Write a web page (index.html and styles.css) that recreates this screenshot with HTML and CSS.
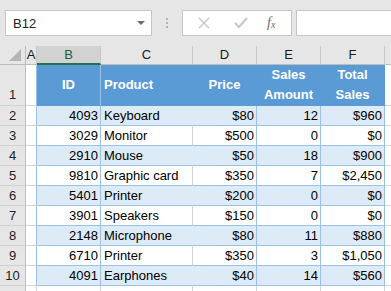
FILE: index.html
```html
<!DOCTYPE html>
<html lang="en">
<head>
    <meta charset="UTF-8">
    <title>Sales Sheet</title>
    <link rel="stylesheet" href="styles.css">
</head>
<body>
    <!-- Name box and formula bar -->
    <div class="toolbar">
        <div class="name-box">
            <span>B12</span>
            <span class="drop"></span>
        </div>
        <div class="grip"><i></i><i></i><i></i></div>
        <div class="fx-buttons">
            <svg width="14" height="14" viewBox="0 0 14 14"><path d="M2 2 L12 12 M12 2 L2 12" stroke="#c6c6c6" stroke-width="1.4" fill="none"/></svg>
            <svg width="16" height="14" viewBox="0 0 16 14"><path d="M2 7 L6 11 L14 2" stroke="#c6c6c6" stroke-width="2" fill="none"/></svg>
            <span class="fx">f<sub>x</sub></span>
        </div>
        <div class="formula"></div>
    </div>

    <!-- Grid -->
    <div class="sheet">
        <div class="corner"><span class="tri"></span></div>
        <div class="col-head">A</div>
        <div class="col-head selected">B</div>
        <div class="col-head">C</div>
        <div class="col-head">D</div>
        <div class="col-head">E</div>
        <div class="col-head">F</div>
        <div class="col-head last"></div>

        <div class="row-head first">1</div>
        <div class="cell col-a"></div>
        <div class="cell th sep center">ID</div>
        <div class="cell th">Product</div>
        <div class="cell th center">Price</div>
        <div class="cell th center">Sales<br>Amount</div>
        <div class="cell th center">Total<br>Sales</div>
        <div class="cell blank"></div>
    </div>
    <div class="sheet rows" id="rows"></div>

    <script>
        const data = [
            [4093, 'Keyboard', '$80', 12, '$960'],
            [3029, 'Monitor', '$500', 0, '$0'],
            [2910, 'Mouse', '$50', 18, '$900'],
            [9810, 'Graphic card', '$350', 7, '$2,450'],
            [5401, 'Printer', '$200', 0, '$0'],
            [3901, 'Speakers', '$150', 0, '$0'],
            [2148, 'Microphone', '$80', 11, '$880'],
            [6710, 'Printer', '$350', 3, '$1,050'],
            [4091, 'Earphones', '$40', 14, '$560']
        ];
        const rows = document.getElementById('rows');
        let html = '';
        data.forEach((r, i) => {
            const band = i % 2 === 0 ? 'band' : '';
            html += `
                <div class="row-head">${i + 2}</div>
                <div class="cell col-a"></div>
                <div class="cell td num ${band}">${r[0]}</div>
                <div class="cell td name ${band}">${r[1]}</div>
                <div class="cell td num ${band}">${r[2]}</div>
                <div class="cell td num ${band}">${r[3]}</div>
                <div class="cell td num ${band}">${r[4]}</div>
                <div class="cell blank"></div>
            `;
        });
        html += '<div class="row-head tail"></div><div class="cell col-a tail"></div>' +
            '<div class="cell tail"></div><div class="cell tail"></div><div class="cell tail"></div>' +
            '<div class="cell tail"></div><div class="cell tail"></div><div class="cell tail blank"></div>';
        rows.innerHTML = html;
    </script>
</body>
</html>
```

FILE: styles.css
```css
body {
    margin: 0;
    font-family: "Liberation Sans", Arial, sans-serif;
    font-size: 13px;
    color: #000;
    background: #fff;
    overflow: hidden;
}

/* Formula bar */
.toolbar {
    display: flex;
    height: 46px;
    padding: 10px 0 0 5px;
    box-sizing: border-box;
    background: #e6e6e6;
}

.name-box {
    width: 147px;
    height: 26px;
    box-sizing: border-box;
    background: #fff;
    border: 1px solid #c6c6c6;
    display: flex;
    align-items: center;
    justify-content: space-between;
    padding: 0 6px 0 7px;
    color: #222;
}

.drop {
    width: 0;
    height: 0;
    border-left: 4px solid transparent;
    border-right: 4px solid transparent;
    border-top: 4px solid #6b6b6b;
}

.grip {
    width: 30px;
    display: flex;
    flex-direction: column;
    align-items: center;
    justify-content: center;
    gap: 2px;
    height: 26px;
}

.grip i {
    width: 2px;
    height: 2px;
    background: #b3b3b3;
}

.fx-buttons {
    width: 110px;
    height: 26px;
    box-sizing: border-box;
    background: #fff;
    border: 1px solid #c6c6c6;
    display: flex;
    align-items: center;
    padding-left: 14px;
    gap: 22px;
}

.fx {
    font-family: "Liberation Serif", serif;
    font-style: italic;
    font-size: 14px;
    color: #6e6e6e;
    margin-left: -4px;
}

.fx sub {
    font-size: 10px;
    vertical-align: -1px;
}

.formula {
    flex: 1;
    margin-left: 4px;
    height: 26px;
    box-sizing: border-box;
    background: #fff;
    border: 1px solid #c6c6c6;
    border-right: none;
}

/* Sheet grid */
.sheet {
    display: grid;
    grid-template-columns: 26px 11px 64px 92px 64px 64px 64px 1fr;
    grid-template-rows: 19px 41px;
}

.sheet.rows {
    grid-template-rows: repeat(9, 20px) 5px;
}

.sheet > div {
    box-sizing: border-box;
}

.corner {
    background: #e6e6e6;
    border-right: 1px solid #bdbdbd;
    border-bottom: 1px solid #bdbdbd;
    position: relative;
}

.tri {
    position: absolute;
    right: 4px;
    bottom: 3px;
    width: 0;
    height: 0;
    border-left: 12px solid transparent;
    border-bottom: 12px solid #b5b5b5;
}

.col-head {
    background: #e6e6e6;
    border-right: 1px solid #c8c8c8;
    border-bottom: 1px solid #bdbdbd;
    text-align: center;
    line-height: 18px;
    color: #1a1a1a;
}

.col-head.selected {
    background: #d2d2d2;
    border-bottom: 2px solid #217346;
    color: #1e5e3a;
}

.col-head.last {
    border-right: none;
}

.row-head {
    background: #e6e6e6;
    border-right: 1px solid #bdbdbd;
    border-bottom: 1px solid #d0d0d0;
    text-align: center;
    line-height: 19px;
    color: #222;
}

.row-head.first {
    display: flex;
    align-items: flex-end;
    justify-content: center;
    padding-bottom: 1px;
}

.cell {
    border-right: 1px solid #d4d4d4;
    border-bottom: 1px solid #d4d4d4;
    line-height: 19px;
    white-space: nowrap;
}

.col-a {
    border-right-color: #9bc2e6;
}

.blank {
    border-right: none;
}

/* Table header */
.th {
    background: #5b9bd5;
    color: #fff;
    font-weight: bold;
    border-right-color: #5b9bd5;
    border-bottom-color: #5b9bd5;
    display: flex;
    align-items: center;
    padding: 0 3px;
    line-height: 20px;
}

.th.center {
    justify-content: center;
    text-align: center;
}

.th.sep {
    border-right-color: #9bc2e6;
}

/* Table body */
.td {
    border-right-color: #9bc2e6;
    border-bottom-color: #9bc2e6;
    padding: 0 2px 0 3px;
}

.td.num {
    text-align: right;
}

.td.name {
    border-right-color: #d4d4d4;
}

.td.band {
    background: #ddebf7;
}

.td.name.band {
    border-right-color: #ddebf7;
}

.tail {
    border-bottom: none;
}

.col-a.tail {
    border-right-color: #d4d4d4;
}
```
